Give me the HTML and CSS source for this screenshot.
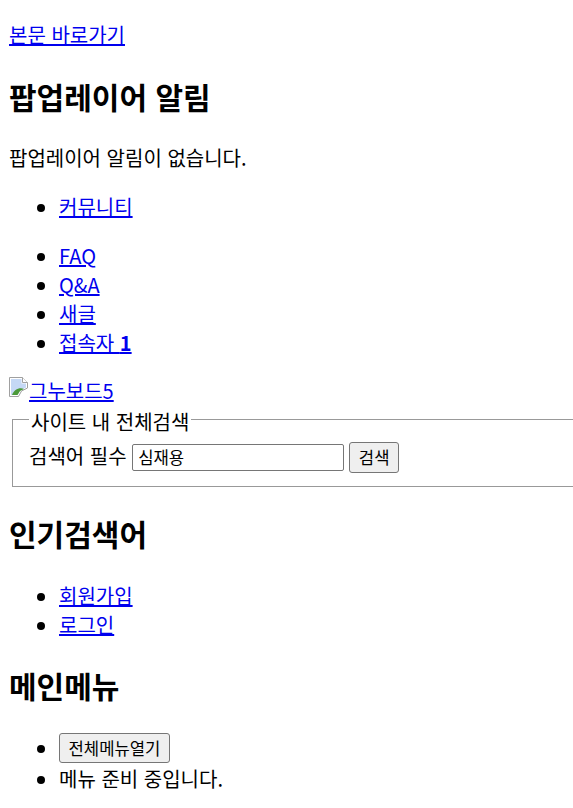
FILE: index.html
```html
<!DOCTYPE html>
<html lang="ko">
<head>
<meta charset="utf-8">
<title>그누보드5</title>
<link rel="stylesheet" href="styles.css">
</head>
<body>
<div class="skip"><a href="#main">본문 바로가기</a></div>
<h1>팝업레이어 알림</h1>
<p>팝업레이어 알림이 없습니다.</p>
<ul><li><a href="#a">커뮤니티</a></li></ul>
<ul>
<li><a href="#a">FAQ</a></li>
<li><a href="#a">Q&amp;A</a></li>
<li><a href="#a">새글</a></li>
<li><a href="#a">접속자 <strong>1</strong></a></li>
</ul>
<div class="logo"><a href="#a"><svg class="broken" width="20" height="20" viewBox="0 0 20 20"><path d="M.5.500h13l5 5v5.500l-6 3-3 5.500H.5z" fill="#fff" stroke="#a0a0a0"/><path d="M13.500.5v5h5" fill="#fff" stroke="#a0a0a0"/><path d="M2 2h10.500v4.500H17v4l-6 3-2.500 4.500H2z" fill="#c5d8f5"/><path d="M3 18c2-5 7-8 12-6l-4 2-2.500 4z" fill="#4c9a3a"/></svg>그누보드5</a></div>
<form class="search">
<fieldset>
<legend>사이트 내 전체검색</legend>
<label for="q">검색어 필수</label>
<input id="q" class="field" type="text" value="심재용">
<button type="button" class="btn">검색</button>
</fieldset>
</form>
<h2>인기검색어</h2>
<ul>
<li><a href="#a">회원가입</a></li>
<li><a href="#a">로그인</a></li>
</ul>
<h2>메인메뉴</h2>
<ul>
<li><button type="button" class="btn">전체메뉴열기</button></li>
<li>메뉴 준비 중입니다.</li>
</ul>
</body>
</html>
```
FILE: styles.css
```css
html { overflow: hidden; }
body {
  margin: 9px 0 9px 9px;
  font-family: "Noto Sans CJK KR", "Noto Sans", "Liberation Serif", sans-serif;
  font-size: 20px;
  line-height: 29px;
}
.skip { margin: 11px 0 0; }
h1, h2 { font-size: 30px; line-height: 45px; margin: 25px 0; }
h1 { margin-bottom: 24px; }
h2 { margin-top: 24px; }
p { margin: 20px 0; }
ul { margin: 20px 0; padding-left: 50px; }
.logo { line-height: 27px; }
.broken { vertical-align: 2px; margin-top: -4px; }
.search { margin-top: -1px; }
fieldset { margin: 0 0 0 3px; padding: 5px 16px 13px; border: 1px solid #999; border-right: 0; }
legend { padding: 4px 2px 0; }
.field { width: 212px; height: 27px; box-sizing: border-box; font: 16.67px "Noto Sans CJK KR", sans-serif; padding: 1px 5px; border: 1px solid #767676; border-radius: 2px; }
.btn { font: 16.67px "Noto Sans CJK KR", sans-serif; height: 30px; padding: 1px 8.5px; margin-bottom: 1px; background: #efefef; border: 1px solid #767676; border-radius: 3px; color: #000; vertical-align: 1px; }
.search .btn { margin: 0 0 0 -1px; height: 31px; padding: 1px 9px; vertical-align: baseline; }
```
